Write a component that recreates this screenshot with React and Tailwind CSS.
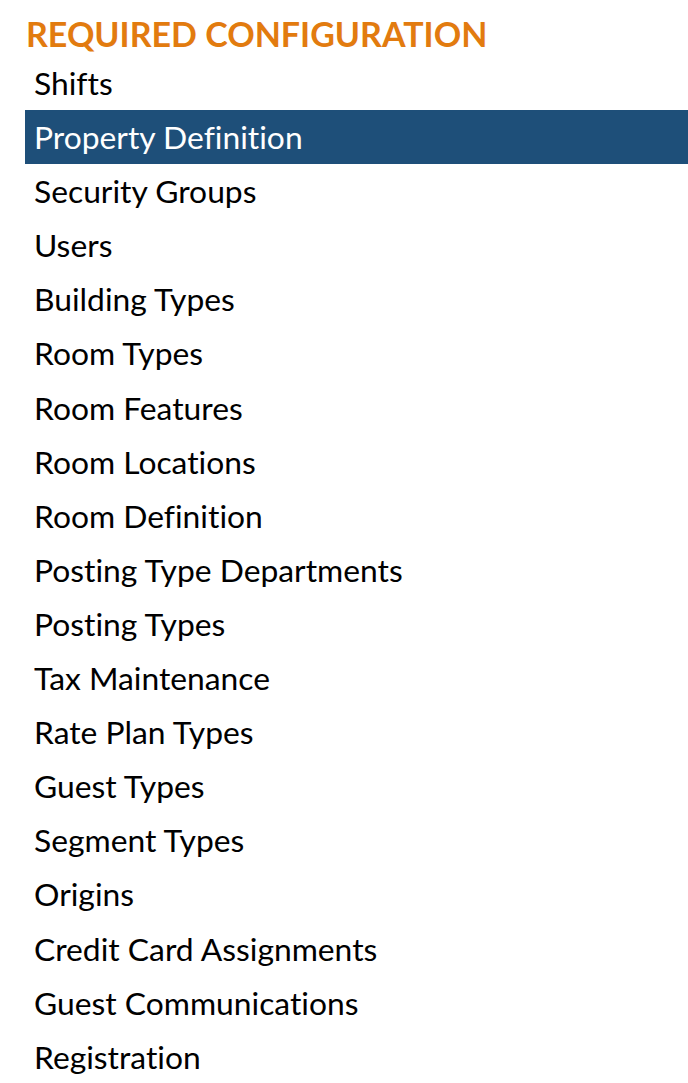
const items = [
  "Shifts",
  "Property Definition",
  "Security Groups",
  "Users",
  "Building Types",
  "Room Types",
  "Room Features",
  "Room Locations",
  "Room Definition",
  "Posting Type Departments",
  "Posting Types",
  "Tax Maintenance",
  "Rate Plan Types",
  "Guest Types",
  "Segment Types",
  "Origins",
  "Credit Card Assignments",
  "Guest Communications",
  "Registration",
];

export default function App() {
  return (
    <div className="min-h-screen bg-white pl-[25px] pt-[12px] font-['Lato',sans-serif] [font-variant-ligatures:none]">
      <h2 className="pl-[1px] text-[34px] font-bold leading-[44px] text-[#e27b0f] uppercase">
        Required Configuration
      </h2>
      <ul>
        {items.map((item) => (
          <li
            key={item}
            className={`h-[54.1px] pl-[9px] text-[31.8px] leading-[54.1px] ${
              item === "Property Definition" ? "bg-[#1e4f79] text-white" : "text-black"
            }`}
          >
            {item}
          </li>
        ))}
      </ul>
    </div>
  );
}
